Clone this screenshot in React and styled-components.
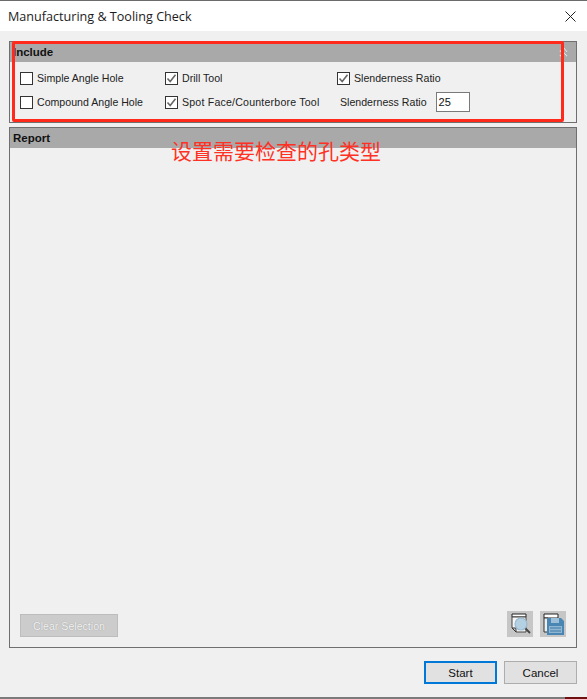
import React from 'react';
import styled, { createGlobalStyle } from 'styled-components';

const Global = createGlobalStyle`
  html, body { margin: 0; padding: 0; background: #f0f0f0; }
  body { font-family: "Liberation Sans", Arial, sans-serif; }
`;

const Dialog = styled.div`
  position: relative;
  width: 587px;
  height: 699px;
  overflow: hidden;
  display: flex;
  flex-direction: column;
  background: #f0f0f0;
  color: #1a1a1a;
`;
const TitleBar = styled.div`
  height: 30px;
  flex: none;
  border-top: 1px solid #6b6b6b;
  background: #fff;
  display: flex;
  align-items: center;
  justify-content: space-between;
  padding: 0 11px 0 8px;
  font-family: "Open Sans", sans-serif;
  font-size: 12.6px;
  color: #1c1c1c;
`;
const CloseIcon = styled.svg`
  width: 11px;
  height: 11px;
  display: block;
`;
const Content = styled.div`
  flex: 1;
  min-height: 0;
  display: flex;
  flex-direction: column;
  gap: 4px;
  padding: 10px 10px 0 9px;
`;
const Panel = styled.section`
  border: 1px solid #6f6f6f;
  display: flex;
  flex-direction: column;
  height: ${(props) => props.height}px;
  box-sizing: border-box;
  flex: none;
`;
const PanelHeader = styled.div`
  height: 20px;
  flex: none;
  background: #a9a9a9;
  display: flex;
  align-items: center;
  justify-content: space-between;
  padding: 0 8px 0 3px;
  font-size: 11.5px;
  font-weight: bold;
  color: #111;
`;
const OptionsGrid = styled.div`
  display: grid;
  grid-template-columns: 145px 172px 1fr;
  grid-auto-rows: 24px;
  padding: 4px 0 0 10px;
  align-items: center;
`;
const Option = styled.label`
  display: flex;
  align-items: center;
  gap: 4px;
  font-size: 10.6px;
  letter-spacing: ${(props) => props.spread || 0}px;
  color: #222;
  white-space: nowrap;
`;
const Box = styled.span`
  width: 13px;
  height: 13px;
  box-sizing: border-box;
  flex: none;
  border: 1px solid #333;
  background: #fff;
  display: block;
  svg { display: block; }
`;
const RatioRow = styled.div`
  display: flex;
  align-items: center;
  padding-left: 3px;
  font-size: 10.6px;
  color: #222;
  white-space: nowrap;
`;
const RatioInput = styled.div`
  width: 34px;
  height: 20px;
  box-sizing: border-box;
  margin-left: 9px;
  border: 1px solid #7a7a7a;
  background: #fff;
  padding: 3px 0 0 2px;
  font-size: 11px;
  color: #111;
`;
const ReportBody = styled.div`
  flex: 1;
  display: flex;
  align-items: flex-end;
  justify-content: space-between;
  padding: 0 10px 10px 10px;
`;
const ClearButton = styled.div`
  width: 98px;
  height: 23px;
  box-sizing: border-box;
  border: 1px solid #bdbdbd;
  background: #cccccc;
  color: #f4f4f4;
  text-shadow: 0 0 1px #8a8a8a;
  font-size: 10.6px;
  display: flex;
  align-items: center;
  justify-content: center;
`;
const IconGroup = styled.div`
  display: flex;
  gap: 7px;
`;
const IconButton = styled.div`
  width: 26px;
  height: 26px;
  background: #c6c6c6;
  display: flex;
  align-items: center;
  justify-content: center;
  svg { display: block; }
`;
const Footer = styled.div`
  flex: none;
  height: 50px;
  display: flex;
  justify-content: flex-end;
  gap: 7px;
  padding: 14px 10px 0 0;
  box-sizing: border-box;
`;
const DialogButton = styled.div`
  width: 73px;
  height: 23px;
  box-sizing: border-box;
  border: ${(props) => props.primary ? '2px solid #0078d7' : '1px solid #adadad'};
  background: #e1e1e1;
  font-size: 11.5px;
  color: #111;
  display: flex;
  align-items: center;
  justify-content: center;
`;
const BottomEdge = styled.div`
  flex: none;
  height: 2px;
  background: #7b7b7b;
  display: flex;
  justify-content: flex-end;
`;
const BottomEdgeMark = styled.div`
  width: 22px;
  background: #6e1010;
`;
const AnnotationBox = styled.div`
  position: absolute;
  left: 12px;
  top: 41px;
  width: 552px;
  height: 81px;
  box-sizing: border-box;
  border: 3px solid #ff2a1c;
  border-radius: 2px;
  pointer-events: none;
`;
const AnnotationText = styled.div`
  position: absolute;
  left: 171px;
  top: 135px;
  font-family: "Noto Sans CJK SC", sans-serif;
  font-size: 21px;
  line-height: 30px;
  color: #ff3024;
  white-space: nowrap;
`;

const Check = () => (
  <svg width="11" height="11" viewBox="0 0 11 11">
    <path d="M1.5 5.5 L4.2 8.5 L9.5 1.8" fill="none" stroke="#666" strokeWidth="1.6" />
  </svg>
);

const CheckBox = ({ checked, spread, children }) => (
  <Option spread={spread}>
    <Box>{checked && <Check />}</Box>
    {children}
  </Option>
);

const Collapse = () => (
  <svg width="9" height="10" viewBox="0 0 9 10">
    <path d="M1 4.5 L4.5 1 L8 4.5 M1 9 L4.5 5.5 L8 9" fill="none" stroke="#f2f2f2" strokeWidth="1.2" strokeDasharray="1.2 .6" />
  </svg>
);

const PreviewIcon = () => (
  <svg width="24" height="24" viewBox="0 0 24 24">
    <path d="M4 2 H18 V5 H4 Z" fill="#fff" stroke="#222" />
    <path d="M4 5 H18 V20 H8 L4 16 Z" fill="#f6f6f6" stroke="#444" />
    <path d="M4 16 L8 16 L8 20 Z" fill="#ccc" stroke="#333" />
    <circle cx="13" cy="12" r="6" fill="#b4d0e3" stroke="#9db9cc" strokeWidth="1.2" />
    <path d="M17.5 16.5 L22 21" stroke="#444" strokeWidth="1.8" />
  </svg>
);

const SaveIcon = () => (
  <svg width="24" height="24" viewBox="0 0 24 24">
    <path d="M3 2 H17 V6 H3 Z" fill="#fff" stroke="#222" />
    <path d="M3 6 H7 V20 H3 Z" fill="#eee" stroke="#333" />
    <path d="M6 6 H20 L23 9 V23 H6 Z" fill="#4a86b4" />
    <rect x="10" y="6" width="8" height="5" fill="#9dc0d8" />
    <rect x="8" y="14" width="13" height="7" fill="#8fb6d2" />
    <path d="M9 16 H20 M9 19 H20" stroke="#3f78a6" />
  </svg>
);

export default function App() {
  return (
    <Dialog>
      <Global />
      <TitleBar>
        <span>Manufacturing &amp; Tooling Check</span>
        <CloseIcon viewBox="0 0 11 11">
          <path d="M.5 .5 L10.5 10.5 M10.5 .5 L.5 10.5" stroke="#222" strokeWidth="1" />
        </CloseIcon>
      </TitleBar>
      <Content>
        <Panel height={82}>
          <PanelHeader>
            <span>Include</span>
            <Collapse />
          </PanelHeader>
          <OptionsGrid>
            <CheckBox>Simple Angle Hole</CheckBox>
            <CheckBox checked>Drill Tool</CheckBox>
            <CheckBox checked>Slenderness Ratio</CheckBox>
            <CheckBox>Compound Angle Hole</CheckBox>
            <CheckBox checked spread={0.2}>Spot Face/Counterbore Tool</CheckBox>
            <RatioRow>
              Slenderness Ratio
              <RatioInput>25</RatioInput>
            </RatioRow>
          </OptionsGrid>
        </Panel>
        <Panel height={521}>
          <PanelHeader>Report</PanelHeader>
          <ReportBody>
            <ClearButton>Clear Selection</ClearButton>
            <IconGroup>
              <IconButton><PreviewIcon /></IconButton>
              <IconButton><SaveIcon /></IconButton>
            </IconGroup>
          </ReportBody>
        </Panel>
      </Content>
      <Footer>
        <DialogButton primary>Start</DialogButton>
        <DialogButton>Cancel</DialogButton>
      </Footer>
      <BottomEdge><BottomEdgeMark /></BottomEdge>
      <AnnotationBox />
      <AnnotationText>设置需要检查的孔类型</AnnotationText>
    </Dialog>
  );
}
